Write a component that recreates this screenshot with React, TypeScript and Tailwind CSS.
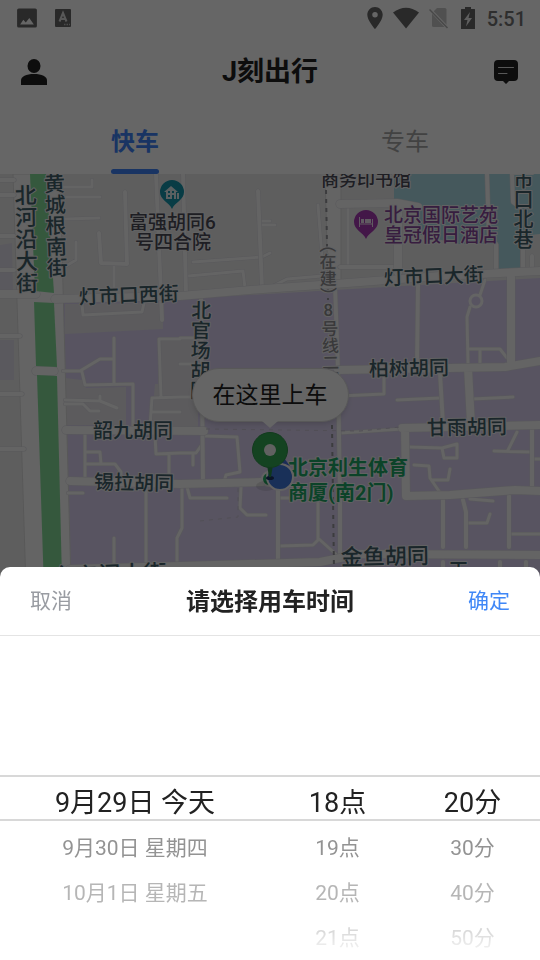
import React, { useState } from 'react';
import clsx from 'clsx';

/* ---------- Map data ---------- */

const WIDE_ROADS = [
  'M0 294H36',
  'M55 299L180 296L263 289L334 284L440 276L540 271',
  'M338 370L505 367L540 361',
  'M66 430L204 431',
  'M70 481L180 484L262 482',
  'M402 428L540 425',
  'M405 428L406 496L450 495L515 490L540 491',
  'M70 569L180 566L320 562L360 554L540 555',
  'M511 275L511 362',
  'M468 368L471 424',
  'M398 205L398 272',
  'M340 204L397 203L418 207',
  'M54 371H36',
];

const MID_ROADS = [
  'M0 270H14', 'M0 236H14', 'M0 195H14', 'M0 180H14', 'M0 336H20', 'M0 394H22', 'M0 449H24',
  'M183 174L186 292', 'M156 174L162 320', 'M201 294L202 384L203 482', 'M258 191L262 288',
  'M335 285L338 370L340 500L340 556', 'M278 490V560', 'M125 192L127 264L101 263L99 233',
  'M418 285L417 366', 'M487 174L489 235', 'M496 244V272', 'M512 174L513 202L520 207', 'M523 250V272',
  'M440 373L443 424', 'M443 500V547', 'M463 500L466 512V547', 'M509 496V547', 'M532 428V486',
  'M532 256V270', 'M340 267H397', 'M443 562V600', 'M526 562V600', 'M500 562V600',
];

const SMALL_ROADS = [
  'M63 187H92V180', 'M64 197H100', 'M65 219L99 218', 'M76 242V260L66 266', 'M114 265V296',
  'M82 304L83 315L142 312L144 303', 'M114 338V384', 'M80 371L100 359H114', 'M180 339H159L161 397',
  'M63 371H80', 'M82 372L85 385L133 384V427', 'M65 400L100 401L117 408M100 401V396',
  'M65 404H83L90 411H99', 'M180 397L152 398L150 427', 'M180 412H152', 'M85 433V478',
  'M86 452H100L101 464', 'M86 464H115L121 472V480', 'M68 493H83', 'M146 488V564', 'M114 538V567',
  'M155 434L156 454L180 453', 'M169 455V482', 'M182 485V528L177 538V564',
  'M260 221H270', 'M262 225H275', 'M193 262L262 257L270 253', 'M188 276L243 271L245 288',
  'M318 205L323 270', 'M267 289L287 279L322 276', 'M180 338H200', 'M180 364H200', 'M180 397H203',
  'M205 436L237 437L240 472L226 475L224 482', 'M180 453H196L203 443', 'M193 465V453',
  'M187 487L190 498H227', 'M241 487L240 508L247 515H266', 'M280 546L313 545L319 539L339 557',
  'M318 503V539', 'M280 498H290', 'M340 433L402 429', 'M340 396L384 394V375', 'M397 400L440 398',
  'M472 399L513 397', 'M409 447L442 448L457 444V458H444L442 448', 'M414 465L429 466L430 478L441 494',
  'M432 480H448L450 469', 'M494 451L530 452', 'M517 432L508 450', 'M532 459H540', 'M468 523H487L490 514',
  'M470 499L493 501', 'M511 534H540', 'M348 208V267', 'M485 280L480 295', 'M470 307L467 317L468 363',
  'M468 349H500L507 358', 'M480 349V363',
];

const RoadLayer: React.FC<{ paths: string[]; width: number }> = ({ paths, width }) => (
  <g fill="none" strokeLinejoin="round" strokeLinecap="round">
    <path d={paths.join('')} stroke="#dcdbe2" strokeWidth={width + 1} />
    <path d={paths.join('')} stroke="#f9f9f9" strokeWidth={width} />
  </g>
);

interface MapLabelProps {
  x: number;
  y: number;
  size?: number;
  tilt?: number;
  color?: string;
  vertical?: boolean;
  bold?: boolean;
  children: string;
}

const MapLabel: React.FC<MapLabelProps> = ({ x, y, size = 20, tilt = 0, color = '#42606a', vertical, bold, children }) => (
  <text
    x={x}
    y={y}
    fontSize={size}
    fill={color}
    stroke="#f4f4f6"
    strokeWidth={2}
    strokeLinejoin="round"
    paintOrder="stroke"
    transform={`rotate(${tilt} ${x} ${y})`}
    className={clsx(bold ? 'font-bold' : 'font-medium', vertical && '[writing-mode:vertical-rl] [text-orientation:upright]')}
  >
    {children}
  </text>
);

const CityMap: React.FC = () => (
  <svg viewBox="0 174 540 786" preserveAspectRatio="xMidYMin slice" className="absolute inset-0 w-full h-full" role="img" aria-label="地图">
    <rect x="0" y="174" width="540" height="786" fill="#ececec" />

    {/* Districts */}
    <path d="M63 303L180 299L334 290L540 278V960H74Z" fill="#dcd3f2" />
    <path d="M0 245L12 243L13 290H0ZM0 340H14V380H0Z" fill="#e2deec" />
    <path d="M65 304L163 303V329L65 334ZM158 338H198V428H151L155 384H158ZM65 378L82 380L86 388L126 387V425H66Z" fill="#e5e3e8" />
    <path d="M394 174H540V234L520 236V268L499 270V244L457 244L418 234V207L394 199Z" fill="#addde5" />

    {/* Avenue with the green belt */}
    <path d="M13 174H60L72 620H27Z" fill="#f9f9f9" stroke="#dcdcdc" />
    <path d="M325 174H341V284H328Z" fill="#f9f9f9" stroke="#dcdcdc" />

    <RoadLayer paths={SMALL_ROADS} width={3} />
    <RoadLayer paths={MID_ROADS} width={4} />
    <RoadLayer paths={WIDE_ROADS} width={8} />
    <circle cx="476" cy="301" r="6" fill="#dcd3f2" stroke="#f9f9f9" strokeWidth="3" />

    <g fill="#86dd9a">
      <path d="M30 174H46L54 293L35 291Z" />
      <path d="M34 302L54 303L57 367L36 366Z" />
      <path d="M37 375L57 376L63 620H45Z" />
    </g>

    {/* Metro under construction and walkways */}
    <g fill="none" stroke="#96969c" strokeDasharray="4 5">
      <path d="M326 190L328 300" strokeWidth="2" />
      <path d="M331 380L332 425L334 570" strokeWidth="2" />
      <path d="M206 429L360 431L400 427" stroke="#cbc4d6" />
      <path d="M200 521L238 517V487" stroke="#cbc4d6" />
    </g>

    <MapLabel x={23} y={184} size={22} tilt={-1} vertical>北河沿大街</MapLabel>
    <MapLabel x={52} y={173} size={21} tilt={-2} vertical>黄城根南街</MapLabel>
    <MapLabel x={79} y={304} tilt={-2}>灯市口西街</MapLabel>
    <MapLabel x={384} y={285} tilt={-2}>灯市口大街</MapLabel>
    <MapLabel x={200} y={300} vertical tilt={1}>北官场胡同</MapLabel>
    <MapLabel x={522} y={149} vertical>灯市口北巷</MapLabel>
    <MapLabel x={369} y={376} tilt={-1}>柏树胡同</MapLabel>
    <MapLabel x={427} y={435} tilt={-1}>甘雨胡同</MapLabel>
    <MapLabel x={93} y={438}>韶九胡同</MapLabel>
    <MapLabel x={94} y={489} tilt={1}>锡拉胡同</MapLabel>
    <MapLabel x={341} y={565} size={22} tilt={-1}>金鱼胡同</MapLabel>
    <MapLabel x={52} y={585} size={23} tilt={-2}>东安门大街</MapLabel>
    <MapLabel x={457} y={560} vertical>王府井大街</MapLabel>
    <MapLabel x={326} y={236} size={17} tilt={-1} color="#8e8e92" vertical>（在建）</MapLabel>
    <MapLabel x={328} y={300} size={17} tilt={-1} color="#8e8e92" vertical>8号线二期</MapLabel>
    <MapLabel x={321} y={186} size={18} color="#4c4c58">商务印书馆</MapLabel>
    <MapLabel x={129} y={229} size={19} color="#4c4c58">富强胡同6</MapLabel>
    <MapLabel x={135} y={249} size={19} color="#4c4c58">号四合院</MapLabel>
    <MapLabel x={384} y={222} size={19} color="#8a4a9e">北京国际艺苑</MapLabel>
    <MapLabel x={384} y={242} size={19} color="#8a4a9e">皇冠假日酒店</MapLabel>
    <MapLabel x={288} y={475} color="#1fa868" bold>北京利生体育</MapLabel>
    <MapLabel x={288} y={500} color="#1fa868" bold>商厦(南2门)</MapLabel>

    {/* Guesthouse pin */}
    <path d="M172 180a12 12 0 0 1 12 12c0 8-9 10-12 17c-3-7-12-9-12-17a12 12 0 0 1 12-12Z" fill="#1596ac" />
    <path d="M164 192L171 186L178 192H176V199H166V192ZM177 193H179V199H177Z" fill="#e0f0f3" />
    <path d="M168 191h2v2h-2ZM172 191h2v2h-2ZM168 195h2v2h-2ZM172 195h2v4h-2Z" fill="#1596ac" />

    {/* Hotel pin */}
    <path d="M366 210a12 12 0 0 1 12 12c0 8-9 10-12 17c-3-7-12-9-12-17a12 12 0 0 1 12-12Z" fill="#a83bb4" />
    <path d="M359.500 217V227M359.500 224H372.500M372.500 219V227" stroke="#f0e2f2" fill="none" />
    <path d="M361 219h3v4h-3ZM365 219h6v4h-6Z" fill="#f0e2f2" />

    {/* Current position and pick-up pin */}
    <circle cx="269" cy="479" r="7" fill="#2ab067" stroke="#f4f4f4" strokeWidth="2" />
    <path d="M284 458l6 8l-6-2l-4 1Z" fill="#4470d8" />
    <ellipse cx="266" cy="486" rx="10" ry="5" fill="#000" opacity=".1" />
    <circle cx="280" cy="477" r="13" fill="#3f78dc" stroke="#f4f4f4" strokeWidth="2" />
    <ellipse cx="270" cy="478" rx="4" ry="2" fill="#1c3460" />
    <path d="M267 465h6l-2 12h-2Z" fill="#278c48" />
    <circle cx="270" cy="450" r="17.5" fill="#34a853" stroke="#2c9149" />
    <circle cx="270" cy="450" r="6" fill="#f2f2f2" />
  </svg>
);

/* ---------- Page behind the sheet ---------- */

const StatusBar: React.FC = () => (
  <div className="h-9 flex items-center justify-between pl-4 pr-3.5 text-[#666]">
    <div className="flex items-center gap-4">
      <svg viewBox="0 0 24 24" className="w-[22px] h-6" fill="currentColor" aria-hidden="true">
        <path fillRule="evenodd" d="M3 1.5h18a1.800 1.800 0 0 1 1.800 1.800v17.400a1.800 1.800 0 0 1-1.800 1.800H3a1.800 1.800 0 0 1-1.800-1.800V3.300A1.800 1.800 0 0 1 3 1.500ZM4.500 19h15l-5-7l-3.800 5l-2.700-3.200Z" />
      </svg>
      <svg viewBox="0 0 18 20" className="w-[18px] h-5" aria-hidden="true">
        <rect x="1" y="1" width="16" height="18" rx="1" fill="currentColor" />
        <path d="M5.5 13.5L9 5L12.500 13.500M6.500 11H11.500" stroke="#ddd" strokeWidth="2" fill="none" />
        <path d="M10 16.500h6" stroke="#bbb" strokeWidth="1.500" strokeDasharray="1.500 1" />
      </svg>
    </div>
    <div className="flex items-center gap-2.5">
      <svg viewBox="5 2 14 20" className="w-4 h-[22px]" fill="currentColor" aria-hidden="true">
        <path d="M12 2C8.130 2 5 5.130 5 9c0 5.250 7 13 7 13s7-7.750 7-13c0-3.870-3.130-7-7-7zm0 9.500a2.500 2.500 0 1 1 0-5 2.500 2.500 0 0 1 0 5z" />
      </svg>
      <svg viewBox="0 0 26 22" className="w-[26px] h-[22px]" fill="currentColor" aria-hidden="true">
        <path d="M0 5.500Q13-4 26 5.500L13 21.500Z" />
      </svg>
      <svg viewBox="0 0 20 22" className="w-5 h-[22px]" aria-hidden="true">
        <path d="M8 1h8a1.500 1.500 0 0 1 1.500 1.500v16A1.500 1.500 0 0 1 16 20H4.500A1.500 1.500 0 0 1 3 18.500V6Z" fill="#c9c9c9" />
        <path d="M1.500 3L19 21.500" stroke="#fff" strokeWidth="3" />
        <path d="M.5 2.500L18.500 21" stroke="#b4b4b4" strokeWidth="1.500" />
      </svg>
      <svg viewBox="0 0 14 22" className="w-3.5 h-[22px] mx-0.5" aria-hidden="true">
        <path d="M4 0h6v2h3.500a.5.5 0 0 1 .5.5V22H0V2.500A.5.5 0 0 1 .5 2H4Z" fill="currentColor" />
        <path d="M9 5L3 13h3.500L5 19.500L11 11H7.500Z" fill="#eee" />
      </svg>
      <span className="pt-0.5 text-xl leading-6 font-medium text-[#747474]">5:51</span>
    </div>
  </div>
);

const TopNav: React.FC = () => (
  <header className="h-[72px] grid grid-cols-[1fr_auto_1fr] items-center px-5 text-[#222]">
    <button type="button" aria-label="个人中心" className="justify-self-start">
      <svg viewBox="0 0 28 28" className="w-7 h-7" fill="currentColor" aria-hidden="true">
        <ellipse cx="14" cy="8" rx="6.500" ry="7" />
        <path d="M1 27v-4.500C1 18.500 6 16 14 16s13 2.500 13 6.500V27Z" />
      </svg>
    </button>
    <h1 className="text-[27px] leading-8 font-bold">J刻出行</h1>
    <button type="button" aria-label="消息" className="justify-self-end">
      <svg viewBox="0 0 28 28" className="w-7 h-7" fill="currentColor" aria-hidden="true">
        <path d="M6 2h16a4 4 0 0 1 4 4v13a4 4 0 0 1-4 4h-5l-3 3l-3-3H6a4 4 0 0 1-4-4V6a4 4 0 0 1 4-4Z" />
        <path d="M6.500 9.500H21.500M6.500 15.500H15" stroke="#ddd" strokeLinecap="round" />
      </svg>
    </button>
  </header>
);

const RideTabs: React.FC = () => {
  const [tab, setTab] = useState('快车');
  return (
    <nav className="h-[66px] grid grid-cols-2">
      {['快车', '专车'].map((name) => (
        <button
          key={name}
          type="button"
          onClick={() => setTab(name)}
          className={clsx('relative pt-0.5 text-2xl', tab === name ? 'font-bold text-[#3f83f8]' : 'text-[#a6a6a6]')}
        >
          {name}
          {tab === name && <span className="absolute bottom-0 left-1/2 -translate-x-1/2 w-12 h-[5px] rounded-full bg-[#3f83f8]" />}
        </button>
      ))}
    </nav>
  );
};

/* ---------- Time picker sheet ---------- */

const COLUMNS = [
  { label: '日期', items: ['9月29日 今天', '9月30日 星期四', '10月1日 星期五'] },
  { label: '小时', items: ['18点', '19点', '20点', '21点'] },
  { label: '分钟', items: ['20分', '30分', '40分', '50分'] },
];

const ROW_STYLES = [
  'text-[27px] text-[#222]',
  'text-[21px] text-[#939393]',
  'text-[21px] text-[#b6b6b6]',
  'text-[21px] text-[#d6d6d6]',
];

const TimeSheet: React.FC = () => (
  <section role="dialog" aria-label="请选择用车时间" className="relative bg-white rounded-t-[10px] overflow-hidden">
    <div className="h-[69px] pt-0.5 flex items-center justify-between px-[30px] border-b border-[#e4e4e4]">
      <button type="button" className="text-[21px] text-[#999ca2]">取消</button>
      <h2 className="text-2xl font-bold text-[#222]">请选择用车时间</h2>
      <button type="button" className="text-[21px] text-[#3f87f7]">确定</button>
    </div>
    <div className="relative">
      <div className="grid grid-cols-[2fr_1fr_1fr] pt-36">
        {COLUMNS.map((column) => (
          <ul key={column.label} role="listbox" aria-label={column.label}>
            {column.items.map((item, i) => (
              <li
                key={item}
                role="option"
                aria-selected={i === 0}
                className={clsx('h-[45px] pt-0.5 flex items-center justify-center whitespace-nowrap', ROW_STYLES[i])}
              >
                {item}
              </li>
            ))}
          </ul>
        ))}
      </div>
      {/* Selected row band */}
      <div className="absolute inset-x-0 top-[139px] h-[46px] border-y-2 border-[#d8d8d8] pointer-events-none" />
      <div className="absolute inset-x-0 bottom-0 h-8 bg-linear-to-t from-white to-transparent pointer-events-none" />
    </div>
  </section>
);

export default function App() {
  return (
    <div className="relative min-h-screen flex flex-col bg-white font-['Roboto','Noto_Sans_CJK_SC',sans-serif] antialiased overflow-hidden">
      <StatusBar />
      <TopNav />
      <RideTabs />
      <main className="relative flex-1">
        <CityMap />
        {/* Pick-up callout */}
        <div className="absolute inset-x-0 top-[194px] flex flex-col items-center">
          <div className="px-5 h-[54px] pt-0.5 flex items-center rounded-full bg-[#fcfcfc] border border-[#ddd] shadow-md text-[23px] text-[#222]">
            在这里上车
          </div>
          <svg viewBox="0 0 16 8" className="relative -mt-px w-4 h-2" aria-hidden="true">
            <path d="M0 0H16L8 7Z" fill="#fcfcfc" />
          </svg>
        </div>
      </main>

      {/* Dimmed backdrop with the sheet */}
      <div className="fixed inset-0 z-10 flex flex-col justify-end bg-black/60">
        <TimeSheet />
      </div>
    </div>
  );
}
